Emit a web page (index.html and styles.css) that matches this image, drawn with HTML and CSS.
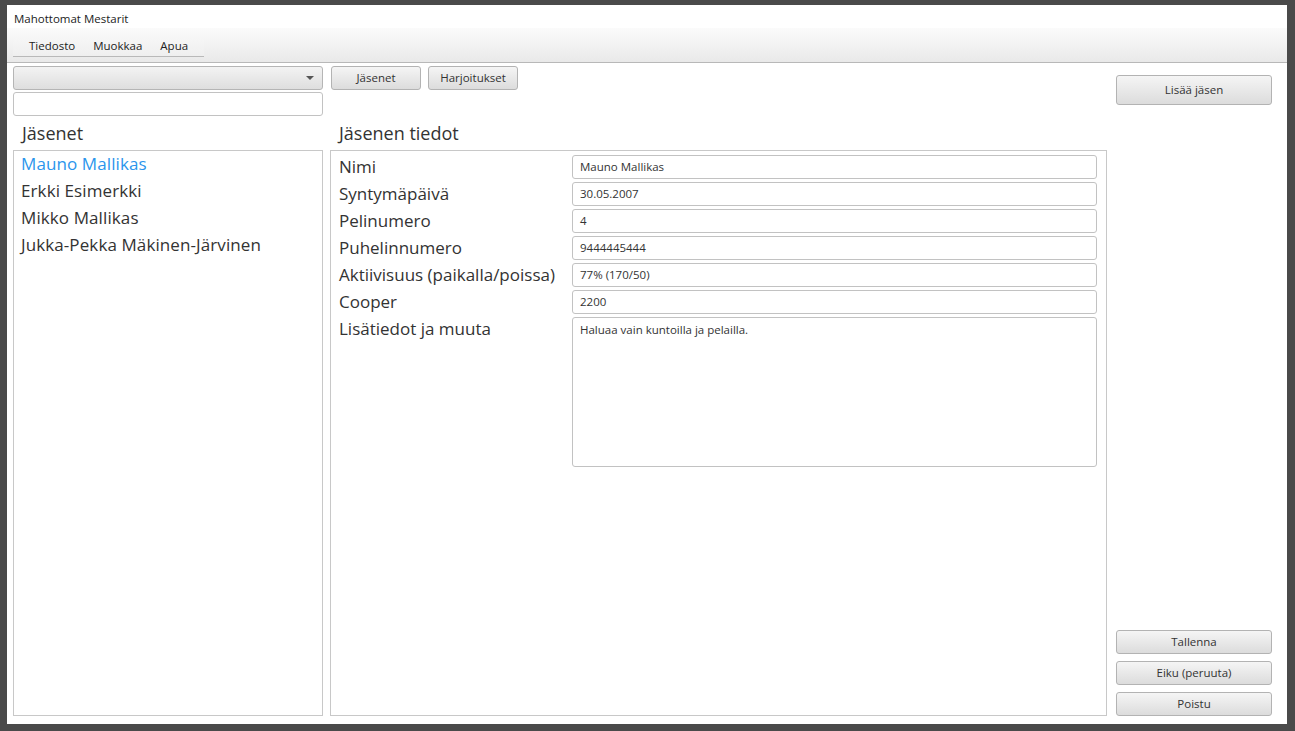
FILE: index.html
```html
<!DOCTYPE html>
<html lang="fi">
<head>
<meta charset="utf-8">
<title>Mahottomat Mestarit</title>
<link rel="stylesheet" href="styles.css">
</head>
<body>
<div class="window">
  <div class="titlebar">Mahottomat Mestarit</div>
  <div class="menubar">
    <div class="menu">
      <span class="menu-item">Tiedosto</span>
      <span class="menu-item">Muokkaa</span>
      <span class="menu-item">Apua</span>
    </div>
  </div>
  <div class="main">
    <div class="col-left">
      <div class="combo"><span class="arrow"></span></div>
      <div class="search"></div>
      <div class="heading">Jäsenet</div>
      <ul class="list">
        <li class="selected">Mauno Mallikas</li>
        <li>Erkki Esimerkki</li>
        <li>Mikko Mallikas</li>
        <li>Jukka-Pekka Mäkinen-Järvinen</li>
      </ul>
    </div>
    <div class="col-mid">
      <div class="tabs">
        <div class="btn tab">Jäsenet</div>
        <div class="btn tab">Harjoitukset</div>
      </div>
      <div class="heading">Jäsenen tiedot</div>
      <div class="panel">
        <div class="form">
          <div class="label">Nimi</div><div class="field">Mauno Mallikas</div>
          <div class="label">Syntymäpäivä</div><div class="field">30.05.2007</div>
          <div class="label">Pelinumero</div><div class="field">4</div>
          <div class="label">Puhelinnumero</div><div class="field">9444445444</div>
          <div class="label">Aktiivisuus (paikalla/poissa)</div><div class="field">77% (170/50)</div>
          <div class="label">Cooper</div><div class="field">2200</div>
          <div class="label">Lisätiedot ja muuta</div><div class="field area">Haluaa vain kuntoilla ja pelailla.</div>
        </div>
      </div>
    </div>
    <div class="col-right">
      <div class="btn add">Lisää jäsen</div>
      <div class="bottom-btns">
        <div class="btn act">Tallenna</div>
        <div class="btn act">Eiku (peruuta)</div>
        <div class="btn act">Poistu</div>
      </div>
    </div>
  </div>
</div>
</body>
</html>
```
FILE: styles.css
```css
* { box-sizing: border-box; }
html, body { margin: 0; padding: 0; }
body {
  background: #4a4a4a;
  font-family: "Open Sans", "Noto Sans", sans-serif;
  color: #333;
  width: 1295px;
  height: 731px;
  padding: 5px 8px 7px 7px;
}
.window {
  width: 1280px;
  height: 719px;
  background: #fff;
  display: flex;
  flex-direction: column;
}
.titlebar {
  height: 23px;
  padding-left: 7px;
  font-size: 11.5px;
  line-height: 28px;
  color: #222;
  background: #fff;
}
.menubar {
  height: 35px;
  background: linear-gradient(#fbfbfb, #e9e9e9);
  border-bottom: 1px solid #b8b8b8;
  padding: 5px 0 0 6px;
}
.menu {
  width: 191px;
  height: 24px;
  background: linear-gradient(#f8f8f8, #efefef);
  border-bottom: 1px solid #b9b9b9;
  display: flex;
  padding-left: 16px;
  gap: 18px;
  font-size: 11.5px;
  line-height: 26px;
  color: #222;
}
.main {
  flex: 1;
  display: grid;
  grid-template-columns: 310px 777px 156px;
  column-gap: 8px;
  padding: 3px 15px 8px 6px;
}
.main > div { display: flex; flex-direction: column; min-height: 0; }
.col-mid { margin-left: -1px; margin-right: 1px; }
.combo {
  height: 24px;
  border: 1px solid #b5b5b5;
  border-radius: 3px;
  background: linear-gradient(#f3f3f3, #dedede);
  position: relative;
}
.arrow {
  position: absolute;
  right: 8px;
  top: 9px;
  width: 0; height: 0;
  border-left: 4px solid transparent;
  border-right: 4px solid transparent;
  border-top: 4px solid #555;
}
.search {
  margin-top: 2px;
  height: 24px;
  border: 1px solid #c2c2c2;
  border-radius: 3px;
  background: #fff;
}
.heading {
  height: 34px;
  font-size: 18px;
  line-height: 34px;
  padding-left: 9px;
  color: #333;
}
.list {
  flex: 1;
  margin: 0;
  padding: 0 0 0 7px;
  list-style: none;
  border: 1px solid #c8c8c8;
  font-size: 17px;
  letter-spacing: 0.1px;
}
.list li { height: 27px; line-height: 26px; color: #333; }
.list li.selected { color: #2b95ec; }
.tabs { display: flex; gap: 7px; height: 24px; padding-left: 1px; margin-bottom: 26px; }
.btn {
  border: 1px solid #b3b3b3;
  border-radius: 3px;
  background: linear-gradient(#f5f5f5, #dcdcdc);
  font-size: 11.5px;
  color: #333;
  text-align: center;
}
.tab { width: 90px; height: 24px; line-height: 22px; }
.panel {
  flex: 1;
  border: 1px solid #c8c8c8;
  padding: 4px 9px 0 8px;
}
.form {
  display: grid;
  grid-template-columns: 233px 1fr;
  grid-auto-rows: 24px;
  row-gap: 3px;
}
.label { font-size: 17px; line-height: 24px; color: #333; white-space: nowrap; }
.field {
  border: 1px solid #c2c2c2;
  border-radius: 3px;
  font-size: 11.5px;
  line-height: 22px;
  padding-left: 7px;
  color: #333;
  background: #fff;
}
.field.area { height: 150px; line-height: 20px; padding-top: 2px; }
.col-right .add { margin-top: 9px; height: 30px; line-height: 28px; }
.bottom-btns { margin-top: auto; display: flex; flex-direction: column; gap: 7px; }
.act { height: 24px; line-height: 22px; }
```
